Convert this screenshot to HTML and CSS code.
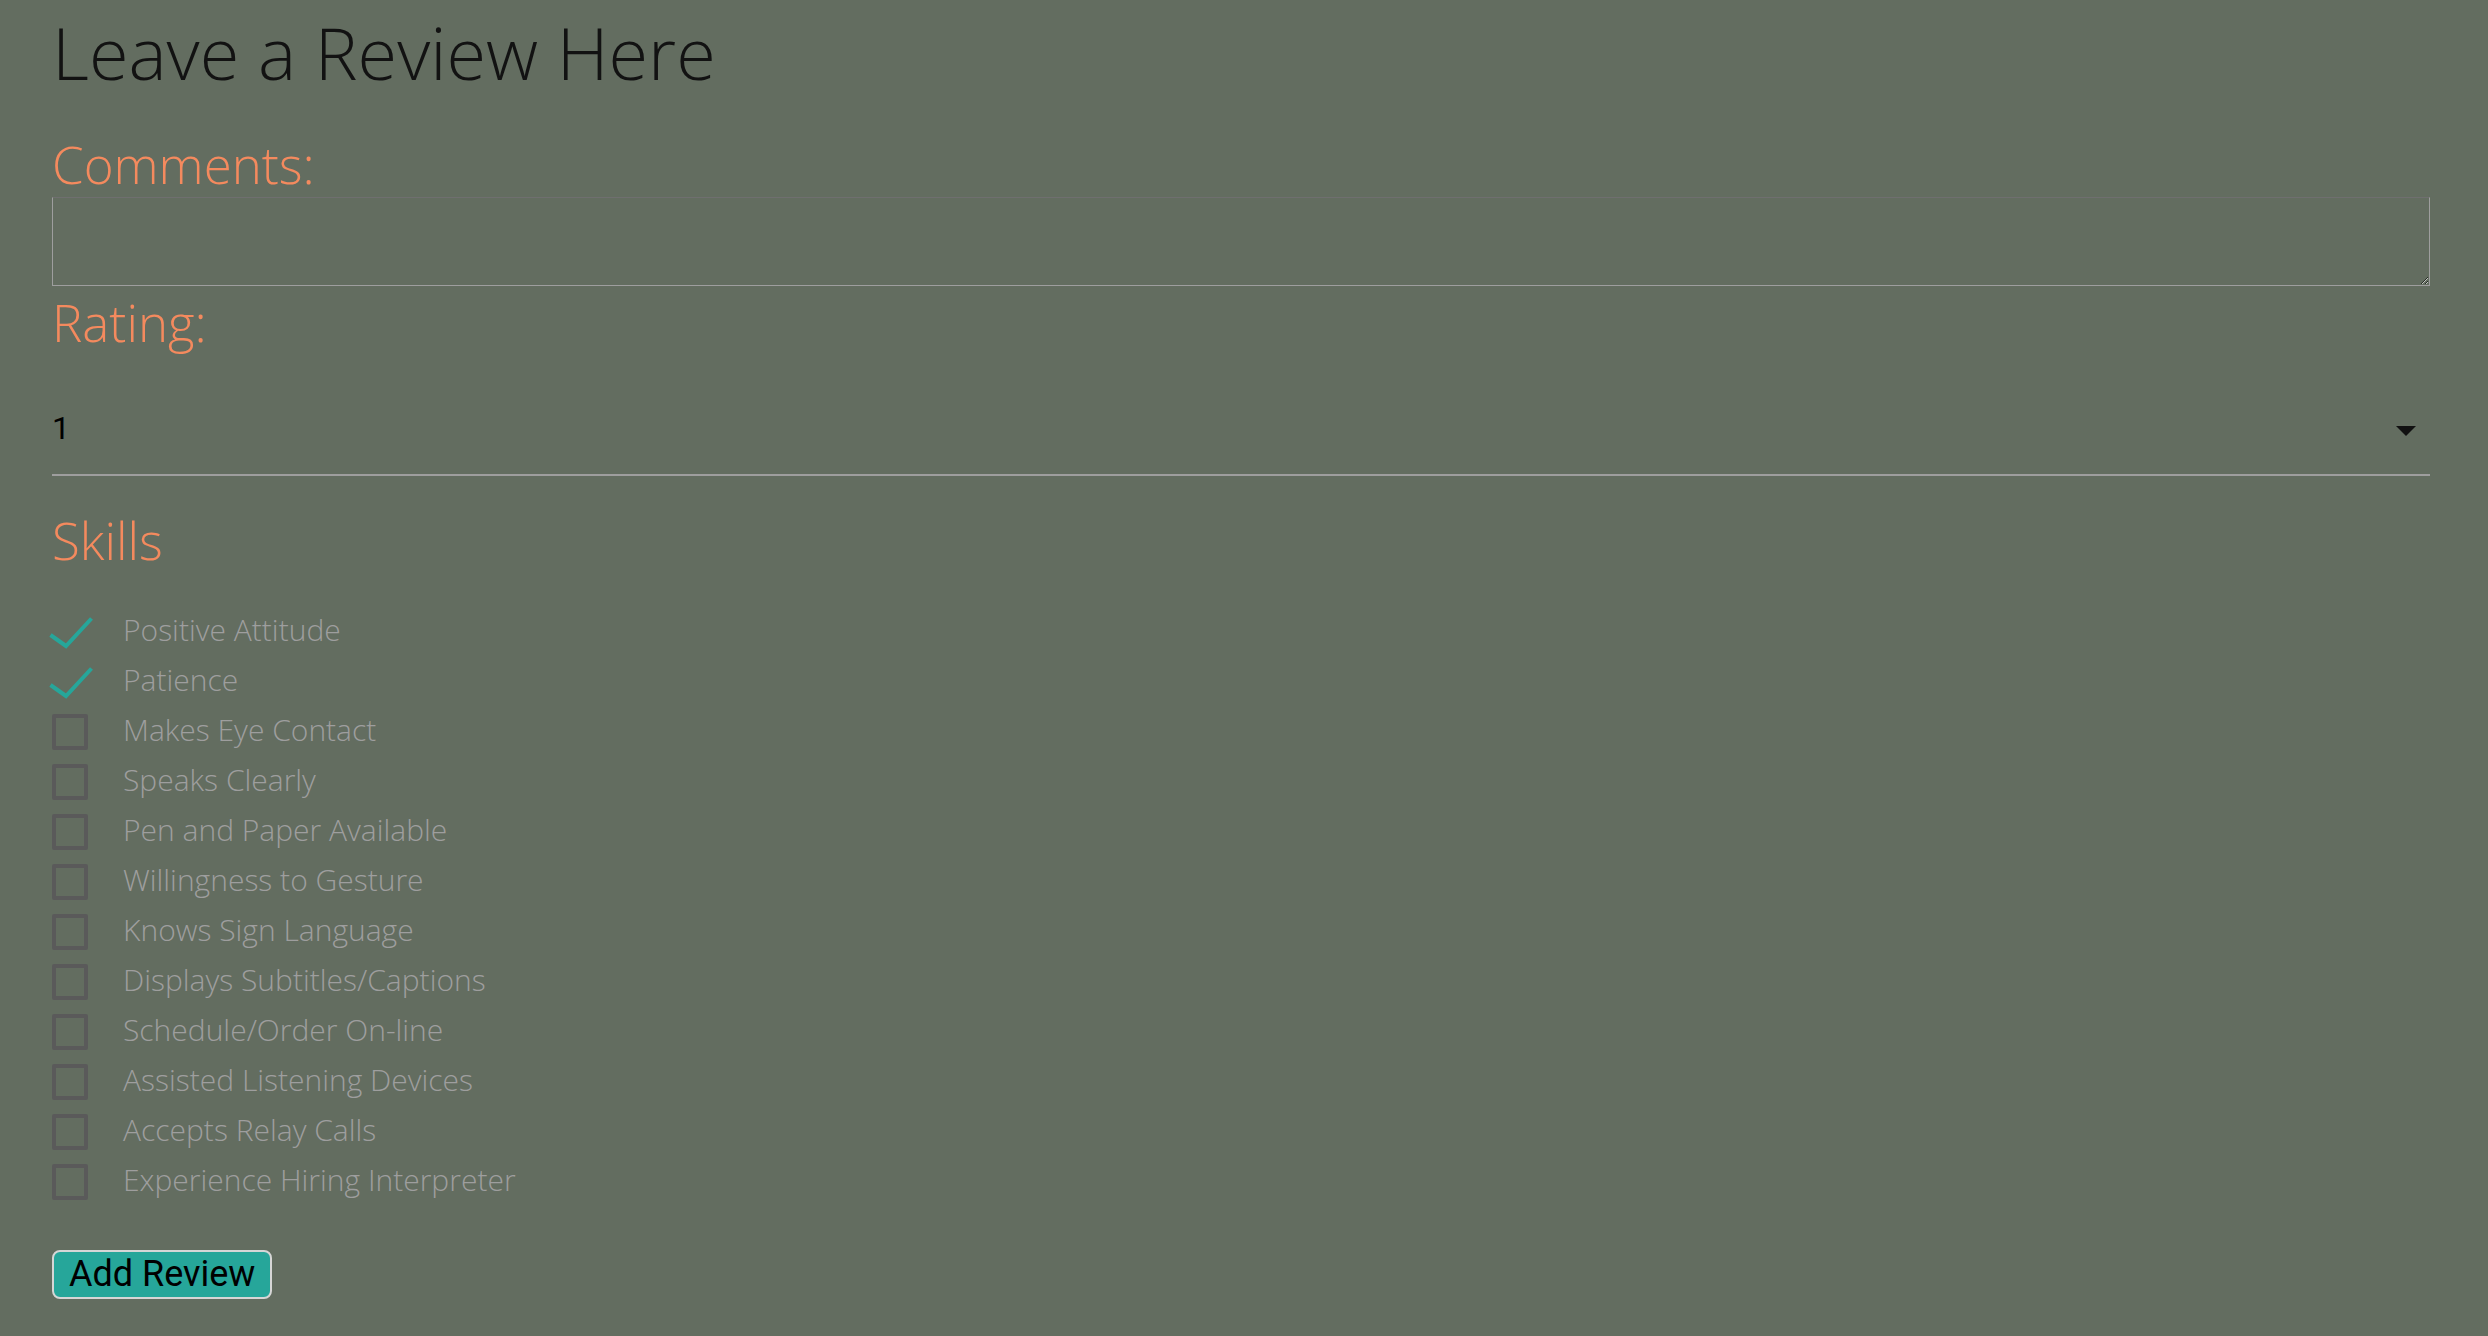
FILE: index.html
```html
<!DOCTYPE html>
<html lang="en">
<head>
<meta charset="utf-8">
<title>Leave a Review Here</title>
<link rel="stylesheet" href="styles.css">
</head>
<body>
<main class="page">
  <h1 class="title">Leave a Review Here</h1>
  <form class="review-form">
    <label class="field-label comments-label" for="comments">Comments:</label>
    <textarea id="comments" class="comments"></textarea>

    <label class="field-label rating-label">Rating:</label>
    <div class="select">
      <span class="select-value">1</span>
      <span class="caret"></span>
    </div>

    <h2 class="field-label skills-label">Skills</h2>
    <div class="skills">
      <label class="skill"><span class="box checked"><svg class="tick" viewBox="0 0 36 36" width="36" height="36"><polyline points="-1.5,21 14,32 39.5,4.5"/></svg></span><span class="skill-text">Positive Attitude</span></label>
      <label class="skill"><span class="box checked"><svg class="tick" viewBox="0 0 36 36" width="36" height="36"><polyline points="-1.5,21 14,32 39.5,4.5"/></svg></span><span class="skill-text">Patience</span></label>
      <label class="skill"><span class="box"></span><span class="skill-text">Makes Eye Contact</span></label>
      <label class="skill"><span class="box"></span><span class="skill-text">Speaks Clearly</span></label>
      <label class="skill"><span class="box"></span><span class="skill-text">Pen and Paper Available</span></label>
      <label class="skill"><span class="box"></span><span class="skill-text">Willingness to Gesture</span></label>
      <label class="skill"><span class="box"></span><span class="skill-text">Knows Sign Language</span></label>
      <label class="skill"><span class="box"></span><span class="skill-text">Displays Subtitles/Captions</span></label>
      <label class="skill"><span class="box"></span><span class="skill-text">Schedule/Order On-line</span></label>
      <label class="skill"><span class="box"></span><span class="skill-text">Assisted Listening Devices</span></label>
      <label class="skill"><span class="box"></span><span class="skill-text">Accepts Relay Calls</span></label>
      <label class="skill"><span class="box"></span><span class="skill-text">Experience Hiring Interpreter</span></label>
    </div>

    <button type="button" class="submit">Add Review</button>
  </form>
</main>
</body>
</html>
```
FILE: styles.css
```css
html, body {
  margin: 0;
  padding: 0;
}

body {
  background: #636d60;
  min-height: 100vh;
  font-family: "Open Sans", "Lato", sans-serif;
}

.page {
  padding: 0 58px 0 52px;
}

.title {
  margin: 12px 0 0;
  font-size: 72px;
  line-height: 80px;
  font-weight: 300;
  color: #121212;
}

.review-form {
  display: flex;
  flex-direction: column;
  align-items: flex-start;
}

.field-label {
  display: block;
  margin: 0;
  font-size: 51px;
  line-height: 60px;
  font-weight: 300;
  color: #f48a5e;
}

.comments-label {
  margin-top: 42px;
}

.comments {
  margin-top: 3px;
  width: 100%;
  height: 89px;
  box-sizing: border-box;
  background: transparent;
  border: 1px solid #9e9e9e;
  border-top-color: #6f6f6f;
  border-radius: 0;
  outline: none;
  padding: 0;
  font: inherit;
}

.rating-label {
  margin-top: 6px;
}

.select {
  margin-top: 30px;
  width: 100%;
  height: 94px;
  box-sizing: border-box;
  border-bottom: 2px solid #9e9e9e;
  display: flex;
  align-items: center;
  justify-content: space-between;
  padding-right: 14px;
}

.select-value {
  font-family: Roboto, "Liberation Sans", sans-serif;
  font-size: 32px;
  line-height: 92px;
  color: #000;
}

.caret {
  width: 0;
  height: 0;
  border-left: 10px solid transparent;
  border-right: 10px solid transparent;
  border-top: 10px solid #111;
  margin-top: 6px;
}

.skills-label {
  margin-top: 34px;
}

.skills {
  margin-top: 38px;
  display: flex;
  flex-direction: column;
}

.skill {
  display: flex;
  align-items: flex-start;
  height: 50px;
}

.box {
  flex: none;
  width: 36px;
  height: 36px;
  margin-top: 6px;
  margin-right: 35px;
  box-sizing: border-box;
  border: 4px solid #5a5a5a;
  border-radius: 2px;
}

.box.checked {
  border: none;
}

.tick {
  display: block;
  overflow: visible;
  fill: none;
  stroke: #26a69a;
  stroke-width: 4;
  stroke-linejoin: miter;
}

.skill-text {
  font-size: 30px;
  line-height: 44px;
  font-weight: 300;
  color: #9e9e9e;
}

.submit {
  margin-top: 42px;
  height: 49px;
  box-sizing: border-box;
  padding: 0 15px;
  border: 2px solid #d6d6d6;
  border-radius: 8px;
  background: #26a69a;
  color: #000;
  font-family: Roboto, "Liberation Sans", sans-serif;
  font-size: 36px;
  line-height: 45px;
}
```
